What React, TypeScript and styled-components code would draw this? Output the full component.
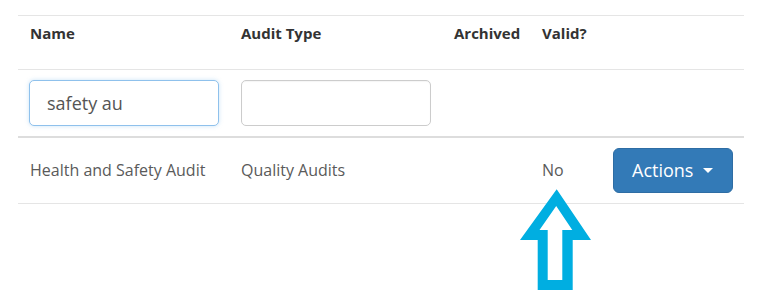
import styled, { createGlobalStyle } from 'styled-components';

const GlobalStyle = createGlobalStyle`
  body {
    margin: 0;
    background: #ffffff;
    font-family: 'Open Sans', 'Liberation Sans', sans-serif;
  }
`;

const Page = styled.div`
  position: relative;
  width: 765px;
  height: 299px;
  padding: 15px 21px 0 18px;
  box-sizing: border-box;
  overflow: hidden;
`;

const Table = styled.table`
  width: 726px;
  border-collapse: collapse;
  table-layout: fixed;
  border-top: 1px solid #e5e5e5;
`;

const HeadCell = styled.th<{ $w: number }>`
  width: ${(p) => p.$w}px;
  height: 54px;
  padding: 6px 12px 0;
  box-sizing: border-box;
  text-align: left;
  vertical-align: top;
  font-size: 15px;
  font-weight: 700;
  color: #333333;
  line-height: 22px;
`;

const FilterRow = styled.tr`
  border-top: 1px solid #e5e5e5;
  border-bottom: 2px solid #dddddd;
`;

const FilterCell = styled.td<{ $pl?: number }>`
  padding: 10px 12px 10px ${(p) => p.$pl ?? 12}px;
  height: 66px;
  box-sizing: border-box;
`;

const SearchInput = styled.input<{ $focus?: boolean }>`
  display: block;
  width: 190px;
  height: 46px;
  box-sizing: border-box;
  padding: 10px 17px;
  font-family: inherit;
  font-size: 18px;
  color: #555555;
  border: 1px solid ${(p) => (p.$focus ? '#8fc1ec' : '#cccccc')};
  border-radius: 5px;
  outline: none;
  box-shadow: ${(p) =>
    p.$focus ? '0 0 4px rgba(102, 175, 233, 0.35)' : 'inset 0 1px 1px rgba(0,0,0,0.04)'};
`;

const DataRow = styled.tr`
  border-bottom: 1px solid #e5e5e5;
`;

const DataCell = styled.td`
  height: 66px;
  padding: 0 12px;
  box-sizing: border-box;
  font-size: 16px;
  color: #5a5a5a;
  vertical-align: middle;
  white-space: nowrap;
`;

const ActionsButton = styled.button`
  display: inline-flex;
  align-items: center;
  gap: 10px;
  width: 120px;
  height: 45px;
  box-sizing: border-box;
  padding: 0 16px 1px 18px;
  font-family: inherit;
  font-size: 18px;
  color: #ffffff;
  background: #337ab7;
  border: 1px solid #2e6da4;
  border-radius: 6px;
`;

const Caret = styled.span`
  width: 0;
  height: 0;
  border-top: 5px solid #ffffff;
  border-left: 5px solid transparent;
  border-right: 5px solid transparent;
  margin-top: 2px;
`;

const Pointer = styled.svg`
  position: absolute;
  left: 0;
  top: 0;
  pointer-events: none;
`;

const UpArrow = () => (
  <Pointer width="765" height="299" viewBox="0 0 765 299">
    <path
      fillRule="evenodd"
      fill="#00aee1"
      d="M556.7 189.3 L591 240 L572.7 240 L572.7 290 L537.7 290 L537.7 240 L520 240 Z
         M556.2 206 L572.3 230 L562.3 230 L562.3 280 L547.7 280 L547.7 230 L539.5 230 Z"
    />
  </Pointer>
);

const App = () => (
  <Page>
    <GlobalStyle />
    <Table>
      <thead>
        <tr>
          <HeadCell $w={211}>Name</HeadCell>
          <HeadCell $w={213}>Audit Type</HeadCell>
          <HeadCell $w={88}>Archived</HeadCell>
          <HeadCell $w={71}>Valid?</HeadCell>
          <HeadCell $w={143}></HeadCell>
        </tr>
      </thead>
      <tbody>
        <FilterRow>
          <FilterCell $pl={11}>
            <SearchInput $focus defaultValue="safety au" />
          </FilterCell>
          <FilterCell>
            <SearchInput />
          </FilterCell>
          <FilterCell />
          <FilterCell />
          <FilterCell />
        </FilterRow>
        <DataRow>
          <DataCell>Health and Safety Audit</DataCell>
          <DataCell>Quality Audits</DataCell>
          <DataCell></DataCell>
          <DataCell>No</DataCell>
          <DataCell>
            <ActionsButton>
              Actions
              <Caret />
            </ActionsButton>
          </DataCell>
        </DataRow>
      </tbody>
    </Table>
    <UpArrow />
  </Page>
);

export default App;
